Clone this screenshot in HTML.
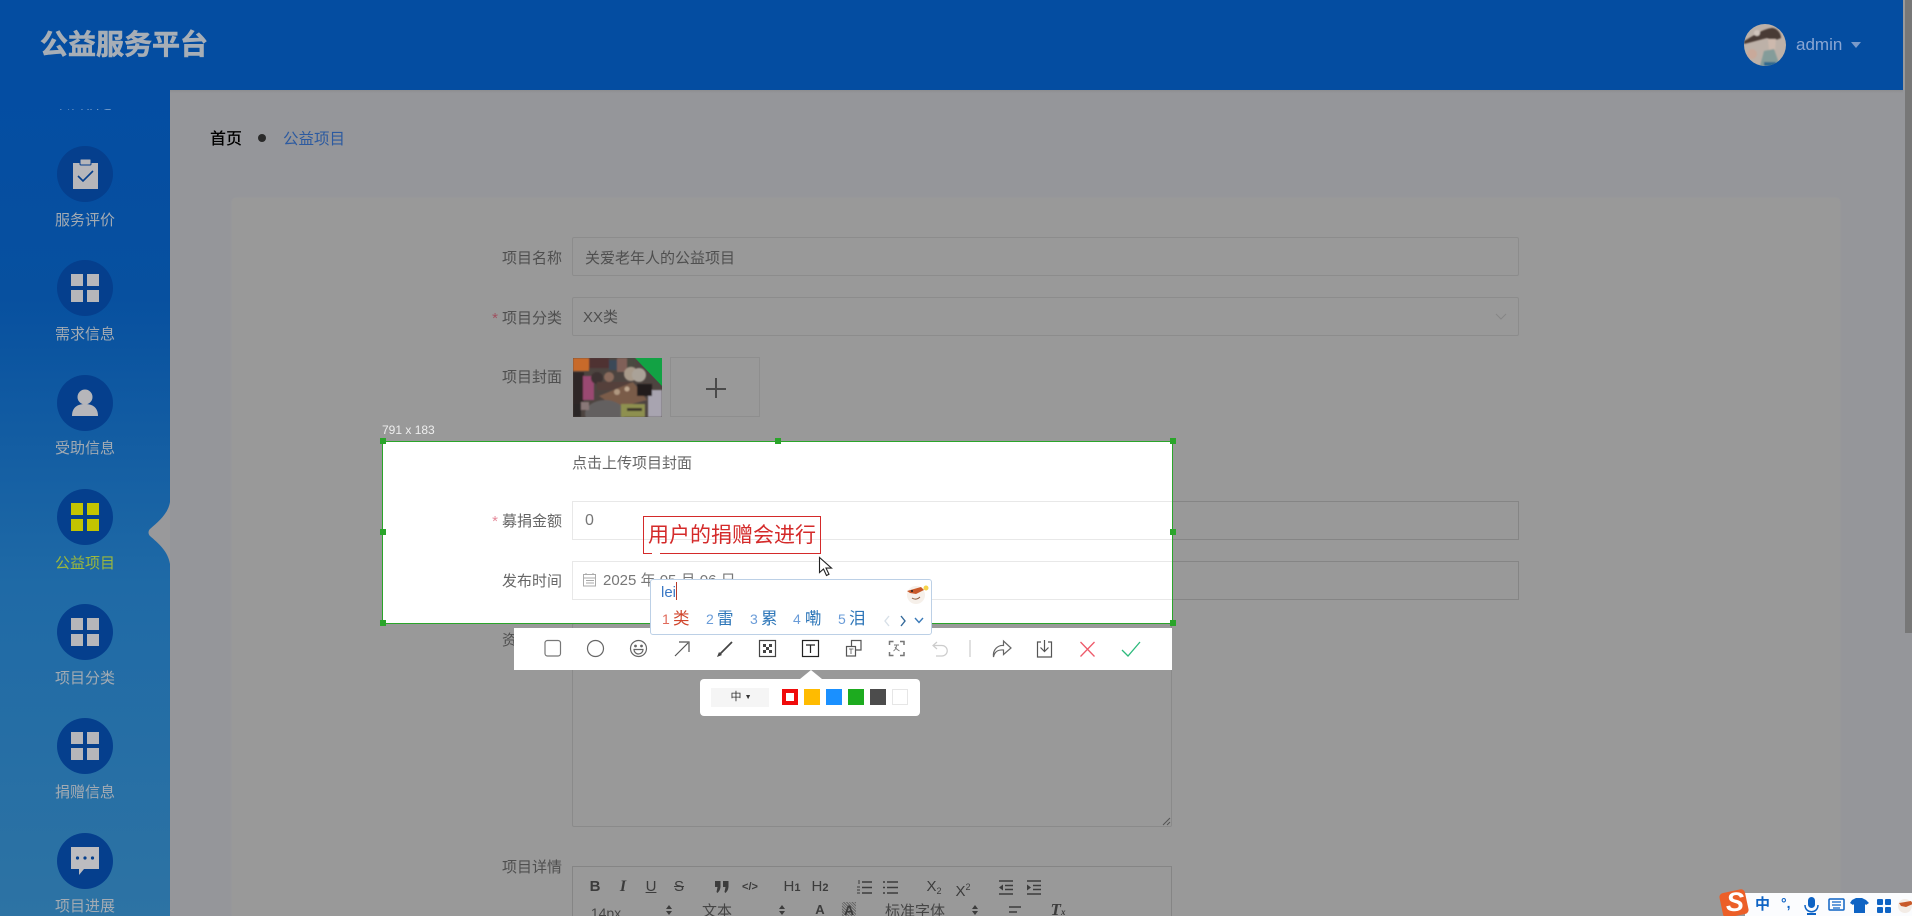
<!DOCTYPE html>
<html lang="zh"><head><meta charset="utf-8"><title>公益服务平台</title>
<style>
html,body{margin:0;padding:0;width:1912px;height:916px;overflow:hidden;background:#99999a;font-family:"Liberation Sans","Noto Sans CJK SC",sans-serif}
*{box-sizing:border-box}
#root{position:relative;width:1912px;height:916px;overflow:hidden;background:#99999a}
.a{position:absolute;white-space:nowrap}
.c{position:absolute;left:57px;width:56px;height:56px;border-radius:50%;background:#053f8d}
.l{position:absolute;left:0;width:170px;text-align:center;font-size:15px;line-height:20px;color:#a3abb3}
.g{position:absolute;left:71px;width:28px;height:27px}
.g i{position:absolute;width:12px;height:11.5px;background:#b6b6ba}
.g i:nth-child(1){left:0;top:0}.g i:nth-child(2){left:16px;top:0}.g i:nth-child(3){left:0;top:16px}.g i:nth-child(4){left:16px;top:16px}
.y i{background:#c3c400}
.lab{position:absolute;width:120px;left:442px;text-align:right;font-size:15px;line-height:22px;color:#4f4f4f}
.lab b{font-weight:400;color:#a0505f;margin-right:4px}
.inp{position:absolute;left:572px;width:947px;height:39px;border:1px solid #8c8c8c;border-radius:2px;font-size:15px;line-height:39px;padding-left:12px;color:#4f4f4f}
.t{position:absolute;transform:translateX(-50%);white-space:nowrap;color:#3c3c3c;line-height:20px}
</style></head><body><div id="root">
<!-- main -->
<div class="a" style="left:170px;top:90px;width:1742px;height:826px;background:#95969a"></div>
<div class="a" style="left:232px;top:198px;width:1608px;height:718px;background:#999999;border-radius:4px 4px 0 0;box-shadow:0 0 2px #9d9d9d"></div>
<div class="a" style="left:1905px;top:0;width:7px;height:633px;background:#777"></div>
<div class="a" style="left:210px;top:126px;font-size:16px;line-height:24px;padding-top:2px;color:#000;font-weight:500">首页</div>
<div class="a" style="left:258px;top:134px;width:8px;height:8px;border-radius:50%;background:#2a2a2a"></div>
<div class="a" style="left:283px;top:128px;font-size:15.5px;line-height:24px;color:#2c5aa0">公益项目</div>

<!-- form dim -->
<div class="lab" style="top:246px;padding-top:2px">项目名称</div>
<div class="inp" style="top:237px;padding-top:1px">关爱老年人的公益项目</div>
<div class="lab" style="top:306px;padding-top:2px"><b>*</b>项目分类</div>
<div class="inp" style="top:297px;padding-left:10px;padding-top:0">XX类</div>
<svg class="a" style="left:1495px;top:312px" width="12" height="9"><path d="M1 2l5 5 5-5" fill="none" stroke="#868686"/></svg>
<div class="lab" style="top:367px;padding-top:0">项目封面</div>
<svg class="a" style="left:573px;top:358px" width="89" height="59" viewBox="0 0 89 59">
<defs><filter id="bl" x="-10%" y="-10%" width="120%" height="120%"><feGaussianBlur stdDeviation=".9"/></filter><clipPath id="ph"><rect width="89" height="59"/></clipPath></defs>
<g clip-path="url(#ph)"><rect width="89" height="59" fill="#4d4440"/>
<g filter="url(#bl)">
<rect x="0" y="0" width="16" height="13" fill="#c86a2c"/><rect x="16" y="0" width="20" height="10" fill="#4f3030"/><rect x="36" y="2" width="8" height="10" fill="#3a4858"/><rect x="44" y="0" width="10" height="14" fill="#806058"/><rect x="54" y="0" width="8" height="14" fill="#4a4a40"/>
<rect x="0" y="14" width="11" height="32" fill="#2f2828"/>
<rect x="10" y="18" width="11" height="24" fill="#9a4a72"/><circle cx="24" cy="20" r="6" fill="#3e3230"/><circle cx="36" cy="19" r="5" fill="#8a6a5c"/>
<circle cx="58" cy="16" r="7" fill="#a89a8a"/><circle cx="66" cy="17" r="7" fill="#aaa298"/>
<rect x="24" y="24" width="34" height="8" fill="#54403a"/>
<polygon points="26,38 60,24 74,42 44,50" fill="#7a5c4a"/><circle cx="44" cy="34" r="3" fill="#b09880"/><circle cx="54" cy="31" r="2.500" fill="#c0a890"/>
<rect x="75" y="32" width="14" height="27" fill="#a8a4b0"/><rect x="64" y="26" width="15" height="12" fill="#211c1c"/>
<ellipse cx="32" cy="56" rx="20" ry="14" fill="#636060"/>
<rect x="48" y="46" width="24" height="13" fill="#8e9050"/><rect x="54" y="50" width="15" height="3" fill="#3a342c"/>
<rect x="0" y="46" width="8" height="13" fill="#2a2525"/><rect x="8" y="44" width="8" height="8" fill="#877"/>
</g><polygon points="62,0 89,0 89,28" fill="#12a244"/></g></svg>
<div class="a" style="left:670px;top:357px;width:90px;height:60px;border:1px solid #8e8e8e"></div>
<div class="a" style="left:706px;top:388px;width:20px;height:1.5px;background:#4a4a4a"></div>
<div class="a" style="left:715px;top:378px;width:1.5px;height:20px;background:#4a4a4a"></div>
<div class="a" style="left:1172px;top:501px;width:347px;height:39px;border:1px solid #858585;border-left:0"></div>
<div class="a" style="left:1172px;top:561px;width:347px;height:39px;border:1px solid #858585;border-left:0"></div>
<div class="lab" style="top:630px;left:502px;width:auto;">资</div>
<div class="a" style="left:572px;top:623px;width:600px;height:204px;border:1px solid #8a8a8a;border-radius:2px"></div>
<svg class="a" style="left:1162px;top:817px" width="9" height="9"><path d="M1 8l7-7M5 8l3-3" stroke="#555" fill="none"/></svg>
<div class="lab" style="top:857px">项目详情</div>
<div class="a" style="left:572px;top:866px;width:600px;height:60px;border:1px solid #858585;border-bottom:0"></div>

<!-- editor toolbar row 1 (center y 887) -->
<div class="t" style="left:595px;top:877px;font-size:15px;font-weight:700">B</div>
<div class="t" style="left:623px;top:877px;font-size:16px;font-weight:700;font-style:italic;font-family:'Liberation Serif',serif">I</div>
<div class="t" style="left:651px;top:877px;font-size:15px;text-decoration:underline">U</div>
<div class="t" style="left:679px;top:877px;font-size:15px;text-decoration:line-through">S</div>
<svg class="a" style="left:714px;top:880px" width="16" height="14" fill="#3c3c3c"><rect x="1" y="1" width="5.500" height="6"/><rect x="9" y="1" width="5.500" height="6"/><path d="M6.500 6c0 3-1 5-3 7l-1-1 1-5zM14.500 6c0 3-1 5-3 7l-1-1 1-5z"/></svg>
<div class="t" style="left:750px;top:877px;font-size:11px;font-weight:700">&lt;/&gt;</div>
<div class="t" style="left:792px;top:877px;font-size:15px">H<span style="font-size:11px;font-weight:700">1</span></div>
<div class="t" style="left:820px;top:877px;font-size:15px">H<span style="font-size:11px;font-weight:700">2</span></div>
<svg class="a" style="left:855px;top:879px" width="190" height="18" fill="none" stroke="#3c3c3c" stroke-width="1.500"><path d="M4 1v4M2 8h3M2 11h3M2 14h3" stroke-width="1"/><path d="M7 3h10M7 8.500h10M7 14h10M32 3h11M32 8.500h11M32 14h11M28 3h2M28 8.500h2M28 14h2"/><path d="M144 2h14M150 6.500h8M150 10.500h8M144 15h14M172 2h14M178 6.500h8M178 10.500h8M172 15h14"/><path d="M144 8.500l4-3v6zM176 8.500l-4-3v6z" fill="#3c3c3c" stroke="none"/></svg>
<div class="t" style="left:934px;top:877px;font-size:15px">X<span style="font-size:9px;vertical-align:-3px">2</span></div>
<div class="t" style="left:963px;top:877px;font-size:15px">X<span style="font-size:9px;vertical-align:6px">2</span></div>

<!-- editor toolbar row 2 (center y 911) -->
<div class="t" style="left:606px;top:903px;font-size:14px;color:#454545">14px</div>
<div class="t" style="left:717px;top:902px;font-size:15px;color:#454545">文本</div>
<div class="t" style="left:820px;top:900px;font-size:13px;font-weight:700">A</div>
<div class="t" style="left:849px;top:902px;font-size:14px;font-weight:700;background:repeating-linear-gradient(45deg,#666 0 1px,#999 1px 2px);padding:0 2px;line-height:16px">A</div>
<div class="t" style="left:915px;top:902px;font-size:15px;color:#454545">标准字体</div>
<div class="t" style="left:1058px;top:900px;font-size:17px;font-weight:700;font-style:italic;font-family:'Liberation Serif',serif">T<span style="font-size:9px">x</span></div>
<svg class="a" style="left:660px;top:903px" width="370" height="13" fill="#3c3c3c"><path d="M9 2l3 4H6zM9 12l3-4H6zM122 2l3 4h-6zM122 12l3-4h-6zM315 2l3 4h-6zM315 12l3-4h-6z"/><path d="M349 4h12M349 9h8" stroke="#3c3c3c" stroke-width="1.500" fill="none"/></svg>

<!-- selection bright -->
<div class="a" style="left:383px;top:441px;width:790px;height:183px;background:#fff;overflow:hidden"></div>
<div class="a" style="left:572px;top:501px;width:601px;height:39px;border:1px solid #e8e8e8;border-right:0"></div>
<div class="a" style="left:572px;top:561px;width:601px;height:39px;border:1px solid #e8e8e8;border-right:0"></div>
<div class="a" style="left:572px;top:453px;font-size:15px;line-height:22px;padding-top:0;color:#666">点击上传项目封面</div>
<div class="lab" style="top:511px;padding-top:0;color:#666"><b style="color:#e58a9a">*</b>募捐金额</div>
<div class="lab" style="top:571px;padding-top:0;color:#666">发布时间</div>
<div class="a" style="left:585px;top:510px;font-size:16px;line-height:22px;color:#777">0</div>
<svg class="a" style="left:583px;top:573px" width="14" height="14" fill="none" stroke="#aaa"><rect x=".5" y="1.500" width="12" height="11.500"/><path d="M1 5h12M3 7.500h8M3 10h8"/><path d="M3 0v2M10 0v2"/></svg>
<div class="a" style="left:603px;top:570px;font-size:15px;line-height:22px;color:#777">2025 年 05 月 06 日</div>
<div class="a" style="left:382px;top:441px;width:791px;height:183px;border:1.5px solid #2aa52a"></div>
<div class="a" style="left:380px;top:438px;width:6px;height:6px;background:#2aa52a"></div>
<div class="a" style="left:775px;top:438px;width:6px;height:6px;background:#2aa52a"></div>
<div class="a" style="left:1170px;top:438px;width:6px;height:6px;background:#2aa52a"></div>
<div class="a" style="left:380px;top:529px;width:6px;height:6px;background:#2aa52a"></div>
<div class="a" style="left:1170px;top:529px;width:6px;height:6px;background:#2aa52a"></div>
<div class="a" style="left:380px;top:620px;width:6px;height:6px;background:#2aa52a"></div>
<div class="a" style="left:775px;top:620px;width:6px;height:6px;background:#2aa52a"></div>
<div class="a" style="left:1170px;top:620px;width:6px;height:6px;background:#2aa52a"></div>
<div class="a" style="left:382px;top:422px;font-size:12px;line-height:16px;color:#eee">791 x 183</div>

<!-- text annotation -->
<div class="a" style="left:643px;top:516px;width:178px;height:38px;border:1px solid #d42a2a;font-size:21px;line-height:37px;padding-left:4px;color:#d42a2a">用户的捐赠会进行</div>
<div class="a" style="left:652px;top:552px;width:8px;height:6px;background:#fff"></div>
<svg class="a" style="left:818px;top:556px" width="16" height="22"><path d="M1.500 1.500v15l4-3.500 3 6.500 2.500-1.200-3-6.200h5.500z" fill="#fff" stroke="#222" stroke-width="1.100"/></svg>

<!-- toolbar -->
<div class="a" style="left:514px;top:628px;width:658px;height:42px;background:#fff"></div>
<svg class="a" style="left:514px;top:628px" width="658" height="42" fill="none" stroke="#666" stroke-width="1.200">
<rect x="31" y="12.500" width="15.500" height="15.500" rx="2.500" stroke="#777"/>
<circle cx="81.500" cy="20.500" r="8"/>
<circle cx="124.500" cy="20.500" r="8"/><circle cx="121.500" cy="18" r=".8" fill="#666"/><circle cx="127.500" cy="18" r=".8" fill="#666"/><path d="M120 21.500h9a4.500 4.500 0 0 1-9 0z"/>
<path d="M161 28l13-13M165 14h10v10" stroke="#555"/>
<path d="M205 27l13-13" stroke="#444" stroke-width="1.800"/><path d="M203 29l2-5 3 3z" fill="#444" stroke="none"/>
<rect x="245.500" y="12.500" width="16" height="16" stroke="#444"/><g fill="#444" stroke="none"><rect x="249" y="16" width="3" height="3"/><rect x="255" y="16" width="3" height="3"/><rect x="252" y="19" width="3" height="3"/><rect x="249" y="22" width="3" height="3"/><rect x="255" y="22" width="3" height="3"/></g>
<rect x="288.500" y="12.500" width="16" height="16" stroke="#222"/><path d="M292 17h9M296.500 17v8" stroke="#222"/>
<rect x="332.500" y="18.500" width="9" height="9.500" stroke="#555"/><path d="M337.500 18v-5.500h9.500v9.500h-5.500" stroke="#555"/><path d="M335 21h4.500M337 21v5" stroke="#555" stroke-width=".8"/>
<path d="M375.500 17v-3.500h4M386 13.500h4v3.500M390 24v3.500h-4M379.500 27.500h-4v-3.500" stroke="#777" stroke-width="1.500"/><path d="M380 17h5M382.500 17c0 3-1.500 5-3 6M381 19c1 2 3 3 4.500 4" stroke="#777" stroke-width=".9"/>
<path d="M423 14l-4 3.500 4 3.500M419 17.500h9a5 5 0 0 1 0 10.500h-6" stroke="#ccc"/>
<path d="M456 12v17" stroke="#ccc"/>
<path d="M479.500 29c-1-8 5-12 10-11.500V13l7.500 7-7.500 6.500v-4.500c-5-.5-9 1.500-10 7z" stroke="#666"/>
<path d="M527 14h-3.500v15h14V14H534M530.500 12v11M526.500 19.500l4 4 4-4" stroke="#555"/>
<path d="M566.500 14l14 14.500M580.500 14l-14 14.500" stroke="#ee5a6a" stroke-width="1.300"/>
<path d="M608 22l6 6 12-14" stroke="#2cba7c" stroke-width="1.300"/>
</svg>
<div class="a" style="left:800px;top:670px;width:0;height:0;border-left:11px solid transparent;border-right:11px solid transparent;border-bottom:9px solid #fff"></div>
<div class="a" style="left:700px;top:679px;width:220px;height:37px;background:#fff;border-radius:4px"></div>
<div class="a" style="left:711px;top:688px;width:58px;height:19px;background:#f5f5f5;font-size:11px;line-height:19px;text-align:center;color:#333;padding-left:2px">中 <span style="font-size:7px;vertical-align:1px">▼</span></div>
<div class="a" style="left:782px;top:689px;width:16px;height:16px;border:4px solid #f00b0b;background:#fff"></div>
<div class="a" style="left:804px;top:689px;width:16px;height:16px;background:#ffbb00"></div>
<div class="a" style="left:826px;top:689px;width:16px;height:16px;background:#1a90ff"></div>
<div class="a" style="left:848px;top:689px;width:16px;height:16px;background:#1dab1f"></div>
<div class="a" style="left:870px;top:689px;width:16px;height:16px;background:#4c4c4c"></div>
<div class="a" style="left:892px;top:689px;width:16px;height:16px;background:#fff;border:1px solid #e6e6e6"></div>

<!-- IME -->
<div class="a" style="left:650px;top:579px;width:282px;height:56px;background:#fff;border:1px solid #bcd0e6;border-radius:3px"></div>
<div class="a" style="left:661px;top:581px;font-size:15px;line-height:24px;color:#3b78c4">lei<span style="display:inline-block;width:1px;height:18px;background:#b53a2a;vertical-align:-3px"></span></div>
<div class="a" style="left:662px;top:607px;font-size:16px;line-height:24px;color:#2d76b8">
<span style="position:absolute;left:0;font-size:14px;color:#e06a5a">1</span><span style="position:absolute;left:11px;color:#d0452c;font-size:16.500px">类</span>
<span style="position:absolute;left:44px;font-size:14px;color:#6a9cd8">2</span><span style="position:absolute;left:55px;font-size:16.500px">雷</span>
<span style="position:absolute;left:88px;font-size:14px;color:#6a9cd8">3</span><span style="position:absolute;left:99px;font-size:16.500px">累</span>
<span style="position:absolute;left:131px;font-size:14px;color:#6a9cd8">4</span><span style="position:absolute;left:143px;font-size:16.500px">嘞</span>
<span style="position:absolute;left:176px;font-size:14px;color:#6a9cd8">5</span><span style="position:absolute;left:187px;font-size:16.500px">泪</span></div>
<svg class="a" style="left:884px;top:613px" width="40" height="16" fill="none" stroke-width="1.400"><path d="M5 3L1 8l4 5" stroke="#d8e0e8"/><path d="M17 3l4 5-4 5" stroke="#34699a"/><path d="M31 5l4 4.500 4-4.500" stroke="#3a7ab8"/></svg>
<svg class="a" style="left:904px;top:582px" width="26" height="24"><circle cx="12" cy="13" r="9" fill="#f6f0ea"/><path d="M3 9l14-4 3 3-8 4-6-1z" fill="#c8592a"/><circle cx="8" cy="9" r="1" fill="#222"/><path d="M8 16c3 2 6 1 8-1" stroke="#8a5a3a" fill="none"/><circle cx="22" cy="6" r="2.500" fill="#f6d34a"/></svg>

<!-- header -->
<div class="a" style="left:0;top:0;width:1903px;height:90px;background:#044da1"></div>
<div class="a" style="left:40px;top:24px;font-size:28px;line-height:42px;font-weight:700;color:#a7aeb6;-webkit-text-stroke:.6px #a7aeb6">公益服务平台</div>
<svg class="a" style="left:1744px;top:24px" width="42" height="42" viewBox="0 0 42 42"><defs><clipPath id="av"><circle cx="21" cy="21" r="21"/></clipPath><filter id="b2"><feGaussianBlur stdDeviation=".8"/></filter></defs><g clip-path="url(#av)"><rect width="42" height="42" fill="#bdb1a8"/><g filter="url(#b2)"><path d="M0 17C8 13 18 5 28 4c5 0 9 5 9 10l-8 3-6-3C15 16 8 18 0 20z" fill="#4a3a34"/><path d="M24 15h8l-1 11h-6z" fill="#cdb9ad"/><path d="M20 27l10-2 6 17H16z" fill="#849c9a"/><circle cx="8" cy="30" r="5" fill="#c9a99a"/><circle cx="13" cy="9" r="3" fill="#d0c4bc"/><rect x="20" y="38" width="12" height="4" fill="#2d6a90"/></g></g></svg>
<div class="a" style="left:1796px;top:33px;font-size:17px;line-height:24px;color:#8aa6d3">admin</div>
<div class="a" style="left:1851px;top:42px;width:0;height:0;border-left:5px solid transparent;border-right:5px solid transparent;border-top:6px solid #7a9ac9"></div>
<div class="a" style="left:0;top:90px;width:1903px;height:3px;background:linear-gradient(#80808066,#80808000)"></div>

<!-- sidebar -->
<div class="a" style="left:0;top:90px;width:170px;height:826px;background:linear-gradient(#044da2 0%,#07509f 25%,#1f6aa6 60%,#2d73a4 100%)"></div>
<div class="a" style="left:0;top:109px;width:170px;height:2px;overflow:hidden"><div style="position:absolute;left:0;top:-15px;width:170px;text-align:center;font-size:15px;line-height:20px;color:#d5dde8">项目信息</div></div>
<svg class="a" style="left:148px;top:500px" width="22" height="64"><path d="M22 2C20 14 10 22 2 29c-2 2-2 5 0 7 8 7 18 15 20 28z" fill="#99999b"/></svg>

<div class="c" style="top:146px"></div>
<svg class="a" style="left:73px;top:158px" width="25" height="31"><path d="M0 5h25v26H0z" fill="#b6b6ba"/><rect x="7" y="1" width="11" height="6" rx="1" fill="#b6b6ba" stroke="#053f8d" stroke-width="1"/><path d="M5 18l5 5 10-10" stroke="#053f8d" stroke-width="1.600" fill="none"/></svg>
<div class="l" style="top:211px">服务评价</div>

<div class="c" style="top:260px"></div><div class="g" style="top:274px"><i></i><i></i><i></i><i></i></div>
<div class="l" style="top:325px">需求信息</div>

<div class="c" style="top:375px"></div>
<svg class="a" style="left:71px;top:388px" width="28" height="28" fill="#b6b6ba"><circle cx="14" cy="9" r="7.500"/><path d="M1 28c0-9 6-12 13-12s13 3 13 12z"/></svg>
<div class="l" style="top:439px">受助信息</div>

<div class="c" style="top:489px"></div><div class="g y" style="top:503px"><i></i><i></i><i></i><i></i></div>
<div class="l" style="top:554px;color:#9cb83c">公益项目</div>

<div class="c" style="top:604px"></div><div class="g" style="top:618px"><i></i><i></i><i></i><i></i></div>
<div class="l" style="top:669px">项目分类</div>

<div class="c" style="top:718px"></div><div class="g" style="top:732px"><i></i><i></i><i></i><i></i></div>
<div class="l" style="top:783px">捐赠信息</div>

<div class="c" style="top:833px"></div>
<svg class="a" style="left:71px;top:847px" width="28" height="29"><path d="M0 0h28v22H13l-5 6v-6H0z" fill="#bcbcc0"/><circle cx="6.500" cy="11" r="1.600" fill="#053f8d"/><circle cx="14" cy="11" r="1.600" fill="#053f8d"/><circle cx="21.500" cy="11" r="1.600" fill="#053f8d"/></svg>
<div class="l" style="top:897px">项目进展</div>

<!-- sogou bar -->
<div class="a" style="left:1745px;top:893px;width:167px;height:23px;background:#fbfcfe"></div>
<div class="a" style="left:1721px;top:891px;width:26px;height:25px;background:#ec5f28;border-radius:4px;transform:rotate(-12deg)"></div>
<div class="a" style="left:1722px;top:889px;width:26px;font-size:27px;line-height:27px;font-weight:700;color:#fff;text-align:center;font-style:italic">S</div>
<div class="a" style="left:1755px;top:894px;font-size:15px;line-height:22px;font-weight:700;color:#0e63c4">中</div>
<div class="a" style="left:1781px;top:892px;font-size:14px;line-height:22px;font-weight:700;color:#0e63c4">°,</div>
<svg class="a" style="left:1803px;top:897px" width="110" height="19" fill="#0e63c4"><rect x="5" y="0" width="7" height="11" rx="3.500"/><path d="M2 8c0 9 13 9 13 0" stroke="#0e63c4" fill="none" stroke-width="1.500"/><rect x="4" y="16" width="9" height="2"/><rect x="26" y="2" width="15" height="11" rx="1" fill="none" stroke="#0e63c4" stroke-width="1.500"/><path d="M29 5h9M29 8h9M30 11h7" stroke="#0e63c4" stroke-width="1.200"/><path d="M49 3l4-2h6l4 2 3 3-3 2-1-1v9H51V7l-1 1-3-2z"/><rect x="74" y="2" width="6" height="6" rx="1"/><rect x="82" y="2" width="6" height="6" rx="1"/><rect x="74" y="10" width="6" height="6" rx="1"/><rect x="82" y="10" width="6" height="6" rx="1"/><circle cx="102" cy="9" r="7" fill="#f3ece6"/><path d="M96 6l12-2 2 3-7 3-5-1z" fill="#c8592a"/></svg>
</div></body></html>
